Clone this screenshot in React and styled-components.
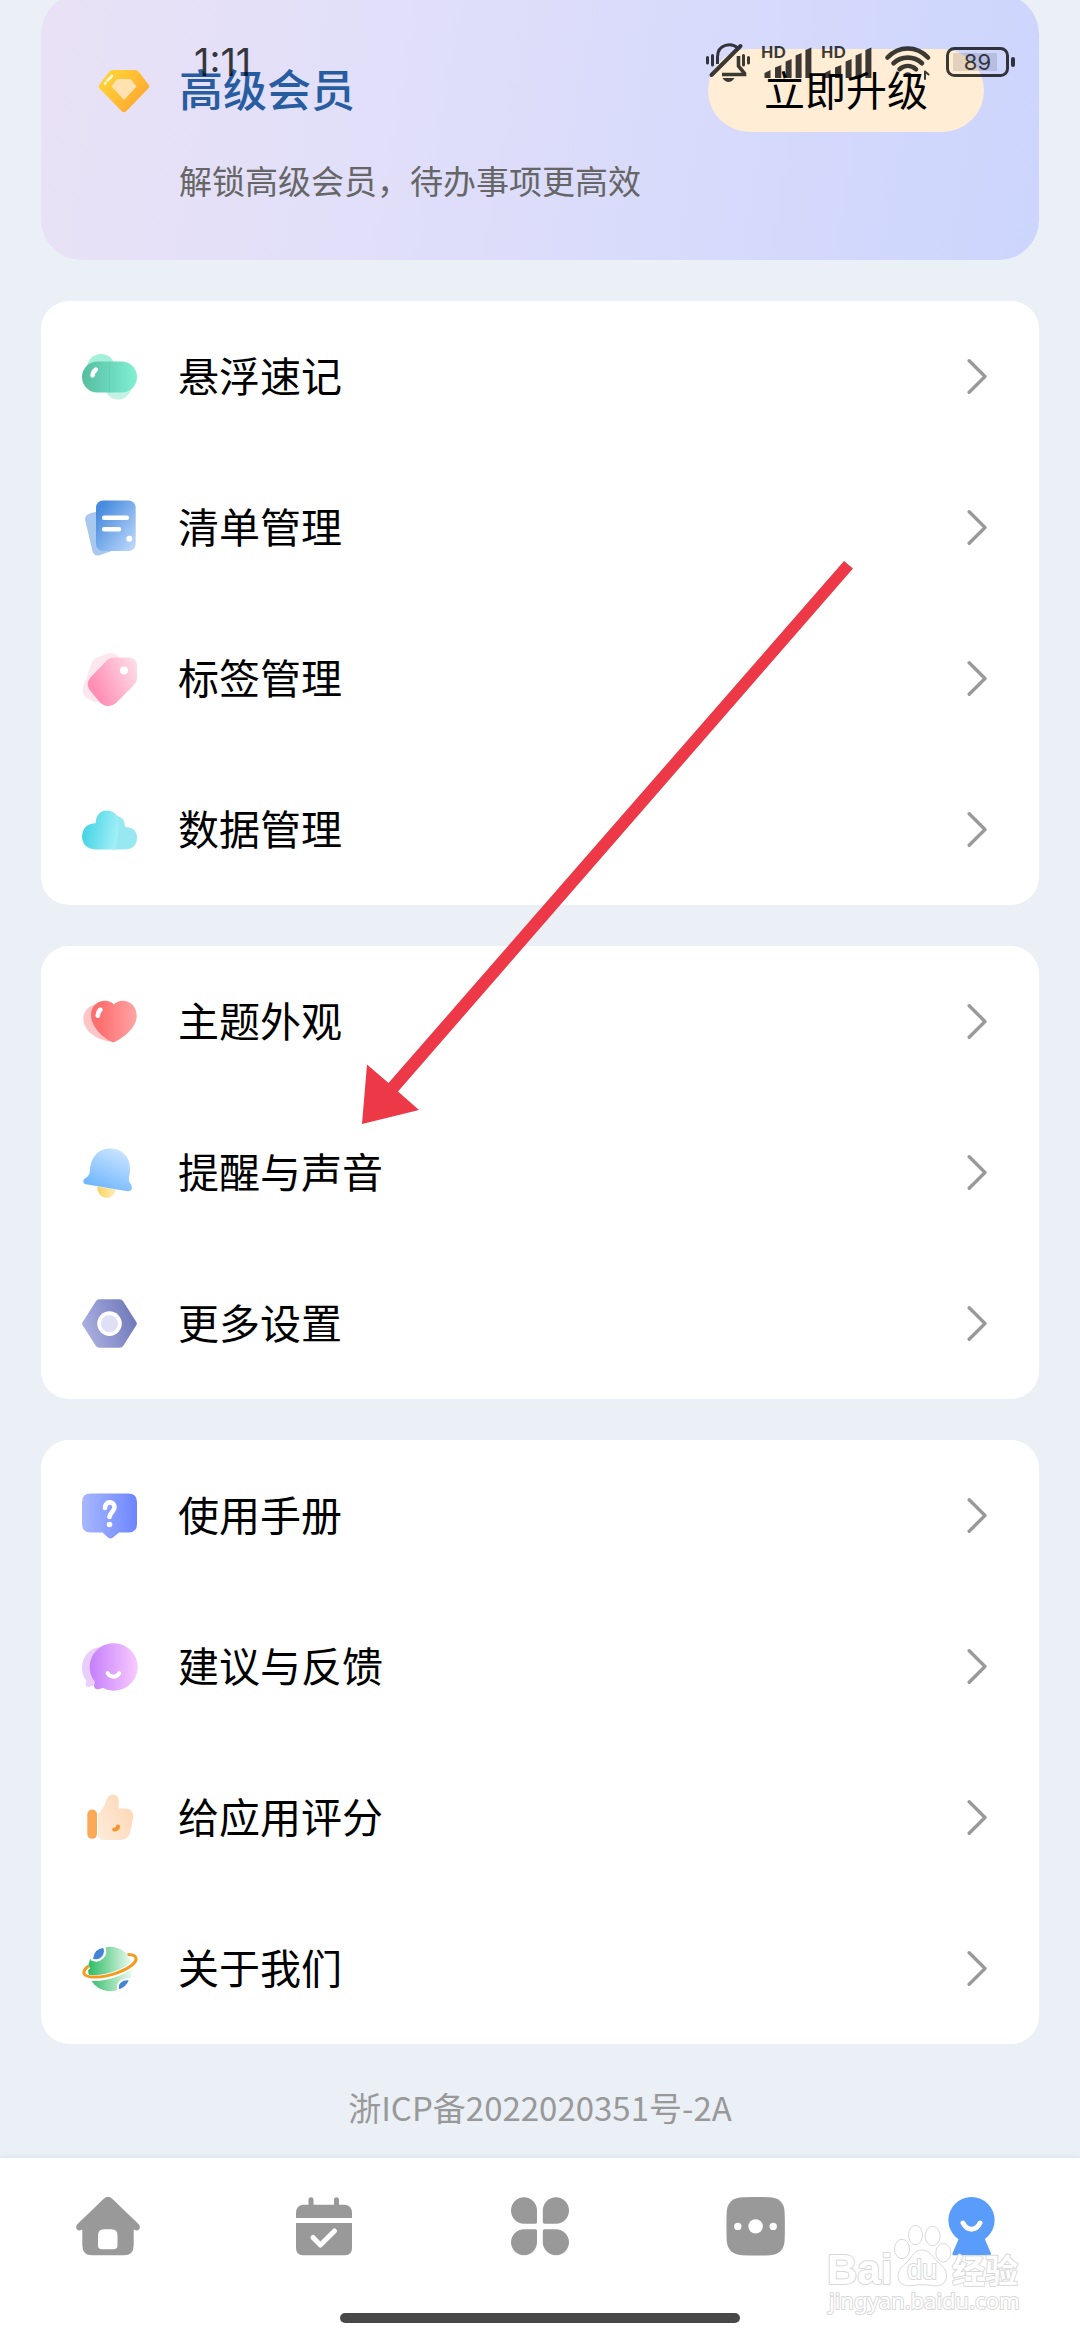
import styled, { createGlobalStyle } from "styled-components";
import { useState } from "react";

const GlobalStyle = createGlobalStyle`
  * {
    box-sizing: border-box;
  }
  body {
    margin: 0;
    background: #ebf0f7;
    font-family: "Noto Sans CJK SC", "Noto Sans", sans-serif;
  }
  button {
    border: none;
    background: none;
    padding: 0;
    margin: 0;
    font-family: inherit;
    color: inherit;
    cursor: pointer;
  }
  svg {
    display: block;
    flex-shrink: 0;
  }
`;

const Page = styled.div`
  position: relative;
  display: flex;
  flex-direction: column;
  min-height: 100vh;
  overflow: hidden;
`;

const StatusBar = styled.div`
  position: absolute;
  top: 0;
  left: 0;
  right: 0;
  height: 124px;
  padding: 0 65px 0 194px;
  display: flex;
  align-items: center;
  justify-content: space-between;
  color: #000000;
  opacity: 0.76;
  pointer-events: none;
`;

const Clock = styled.time`
  font-family: Inter, sans-serif;
  font-size: 38px;
  line-height: 44px;
`;

const StatusIcons = styled.div`
  display: flex;
  align-items: center;
  gap: 9px;
`;

const Content = styled.main`
  flex: 1;
  display: flex;
  flex-direction: column;
  gap: 41px;
  padding: 0 41px 29px;
`;

const MemberCard = styled.section`
  display: grid;
  grid-template-columns: 52px 1fr auto;
  column-gap: 29px;
  row-gap: 24px;
  align-items: center;
  margin-top: -6px;
  padding: 55px 55px 56px 57px;
  border-radius: 40px;
  background: linear-gradient(100deg, #e9e2f6 0%, #dfdefa 42%, #ccd5fd 100%);
`;

const MemberTitle = styled.h1`
  margin: 0;
  padding-bottom: 6px;
  font-size: 44px;
  font-weight: 500;
  line-height: 60px;
  color: #275da0;
`;

const MemberNote = styled.p`
  grid-column: 2 / -1;
  margin: 0;
  font-size: 33px;
  line-height: 48px;
  color: #666666;
`;

const UpgradeButton = styled.button`
  height: 83px;
  padding: 0 56px 6px;
  border-radius: 42px;
  background: #ffedd5;
  font-size: 41px;
  line-height: 60px;
  color: #000000;
`;

const MenuCard = styled.ul`
  list-style: none;
  margin: 0;
  padding: 0;
  border-radius: 28px;
  background: #ffffff;
`;

const MenuRow = styled.button`
  display: flex;
  align-items: center;
  gap: 40px;
  width: 100%;
  height: 151px;
  padding: 0 52px 0 41px;
  font-size: 41px;
  line-height: 60px;
  color: #000000;
  text-align: left;
`;

const MenuLabel = styled.span`
  flex: 1;
  padding-bottom: 6px;
`;

const Record = styled.footer`
  text-align: center;
  font-size: 33px;
  line-height: 44px;
  color: #999999;
`;

const BottomBar = styled.div`
  background: #ffffff;
  box-shadow: 0 -1px 4px rgba(120, 130, 150, 0.12);
`;

const Tabs = styled.nav`
  display: grid;
  grid-template-columns: repeat(5, 1fr);
`;

const TabButton = styled.button`
  display: flex;
  align-items: center;
  justify-content: center;
  height: 138px;
  color: ${(props) => (props.$active ? "#599cf9" : "#999999")};
`;

const HomeIndicator = styled.div`
  width: 400px;
  max-width: 60%;
  height: 10px;
  margin: 17px auto;
  border-radius: 5px;
  background: #484848;
`;

const Pointer = styled.svg`
  position: absolute;
  left: 360px;
  top: 560px;
  pointer-events: none;
`;

const Watermark = styled.svg`
  position: absolute;
  right: 55px;
  bottom: 15px;
  pointer-events: none;
`;

function Gradient({ id, from, to, x1 = 0, y1 = 0, x2 = 1, y2 = 0 }) {
  return (
    <defs>
      <linearGradient id={id} x1={x1} y1={y1} x2={x2} y2={y2}>
        <stop offset="0" stopColor={from} />
        <stop offset="1" stopColor={to} />
      </linearGradient>
    </defs>
  );
}

function MenuIcon({ children }) {
  return (
    <svg width="56" height="56" viewBox="0 0 56 56" fill="none" aria-hidden="true">
      {children}
    </svg>
  );
}

function TabIcon({ children }) {
  return (
    <svg width="64" height="64" viewBox="0 0 64 64" fill="currentColor" aria-hidden="true">
      {children}
    </svg>
  );
}

const CapsuleIcon = () => (
  <MenuIcon>
    <Gradient id="capsule" from="#55bda0" to="#80f0d3" />
    <circle cx="19" cy="19" r="14" fill="#a5f0db" />
    <circle cx="36" cy="37" r="13.5" fill="#c5f2e6" />
    <rect y="12.5" width="55" height="31" rx="15.5" fill="url(#capsule)" />
    <path d="M27.5 12.5V43.5" stroke="#5fceb0" strokeWidth="0.8" />
    <path d="M10.6 26.4C10.8 23.8 12 21.8 13.8 20.6" stroke="#fff" strokeWidth="4.6" strokeLinecap="round" />
  </MenuIcon>
);

const ListIcon = () => (
  <MenuIcon>
    <Gradient id="list" from="#468bdd" to="#c3dcfc" x1={0.1} y1={0.15} x2={1} y2={1} />
    <path
      d="M8.5 13.3L24 9L34 49.6L17.5 55.2Q12 56.5 10.4 51L3.2 20.5Q2.2 15 8.5 13.3Z"
      fill="#a9c8ee"
    />
    <rect x="14" y="0.5" width="39.7" height="50.5" rx="7" fill="url(#list)" />
    <path d="M22.2 17.8H44.8M22.2 29.2H37" stroke="#fff" strokeWidth="4.6" strokeLinecap="round" />
    <circle cx="47.3" cy="38.8" r="3" fill="#fff" />
  </MenuIcon>
);

const TagIcon = () => (
  <MenuIcon>
    <Gradient id="tag" from="#ff8db4" to="#ffdbe6" x1={0.1} y1={0.6} x2={1} y2={0.2} />
    <path
      d="M14 7L26 2.5Q31 1 36 5L50 30L20 52L11 50.5L4.5 47Q-0.5 43 1.5 35L9 14Q10.5 9 14 7Z"
      fill="#fde6ee"
    />
    <path
      d="M25 9Q28 6.5 32 6.5H46Q55 6.5 55 15.5V27Q55 31 52 34L34 52Q26 58.5 18.5 52L8.5 40Q3 33 8.5 26.5Z"
      fill="url(#tag)"
    />
    <circle cx="42" cy="19.5" r="4" fill="#fff" />
  </MenuIcon>
);

const CloudIcon = () => (
  <MenuIcon>
    <Gradient id="cloud" from="#43d3e5" to="#a8f1f8" x1={0} y1={0.6} x2={1} y2={0.8} />
    <path
      d="M30 47.5V14Q42 12 43.3 25Q55 25.5 55 36Q54.5 47 43 47.5Z"
      fill="#98e8f1"
    />
    <path
      d="M13.5 47.5Q0.5 46.5 0 34.5Q1 21.5 13.6 21.2Q14.5 9 24.5 8.5Q32 8.6 36.3 15Q37.5 32 33 47.5Z"
      fill="url(#cloud)"
    />
  </MenuIcon>
);

const HeartIcon = () => (
  <MenuIcon>
    <Gradient id="heart" from="#fe6f6f" to="#fea5a5" x1={0.2} />
    <path
      d="M27 47.5C13 45 1.3 36 1.3 25C1.3 15 9 10.5 16 10.5L34 30Z"
      fill="#fdc5c5"
    />
    <path
      d="M31.3 48.5C26 47 9 35 9 21C9 7 25 3 32 10.5C39 3 54.7 7 54.7 22C54.7 35 38 46 31.3 48.5Z"
      fill="url(#heart)"
    />
    <path d="M15.8 21.5C15.9 19.3 16.8 17.2 18.3 15.8" stroke="#fff" strokeWidth="4.8" strokeLinecap="round" />
  </MenuIcon>
);

const BellIcon = () => (
  <MenuIcon>
    <Gradient id="bell" from="#62b0ff" to="#c6e2ff" x1={0.1} y1={1} x2={0.6} y2={0} />
    <Gradient id="clapper" from="#fbd45f" to="#fdecb8" />
    <path d="M15.3 41.5L34 44.5C32.5 50 29 52.8 24.5 52.8C19 52.5 15 48 15.3 41.5Z" fill="url(#clapper)" />
    <path
      d="M8 24.5C9 11 17 3.5 28 3.5C40 3.5 48.5 12 48 25C47.5 32 45.5 35 48.5 38.5C51.5 43 49.5 46.8 45.5 46.2L4 39.3C0.5 38.7 0.5 35 3.5 33C7 31 7.5 29 8 24.5Z"
      fill="url(#bell)"
    />
  </MenuIcon>
);

const NutIcon = () => (
  <MenuIcon>
    <Gradient id="nut" from="#a6abdd" to="#6972b4" y1={0.3} />
    <path
      d="M17.5 3.2H37.5Q40 3.2 41.3 5.4L54.3 26Q55.4 27.6 54.3 29.3L41.3 49.7Q40 51.8 37.5 51.8H17.5Q15 51.8 13.7 49.7L0.7 29.3Q-0.4 27.6 0.7 26L13.7 5.4Q15 3.2 17.5 3.2Z"
      fill="url(#nut)"
    />
    <circle cx="27.5" cy="27.6" r="12.3" fill="#fff" />
    <circle cx="27.5" cy="27.6" r="8.6" fill="#dfe0f5" />
  </MenuIcon>
);

const HelpIcon = () => (
  <MenuIcon>
    <Gradient id="help" from="#a8b7ff" to="#6d86ff" />
    <path
      d="M8.5 5.5H46.5Q55 5.5 55 14V36Q55 44.5 46.5 44.5H37L31 49.6Q28.5 51.5 26 49.6L20.5 44.5H8.5Q0 44.5 0 36V14Q0 5.5 8.5 5.5Z"
      fill="url(#help)"
    />
    <path d="M23 20C23 12.5 32.3 12.8 32.5 19C32.5 24 27.5 24.5 27.5 29" stroke="#fff" strokeWidth="4.6" strokeLinecap="round" />
    <circle cx="27.5" cy="36.5" r="2.8" fill="#fff" />
  </MenuIcon>
);

const FeedbackIcon = () => (
  <MenuIcon>
    <Gradient id="feedback" from="#c47ffa" to="#f9caff" />
    <path
      d="M20 7.5C7 9 0 18 0 28.5C0 34 1.5 38 4.5 42L3.5 45Q3.5 48 6.5 47.8L12 46.5H25V8Z"
      fill="#e9cefb"
    />
    <path
      d="M31.5 4.3A23.7 23.7 0 1 1 21 49L16.5 50.3Q12 50.5 12 46.5L13 43A23.7 23.7 0 0 1 31.5 4.3Z"
      fill="url(#feedback)"
    />
    <path d="M25.6 34.2C28.5 38.8 34.5 38.8 37.2 34.2" stroke="#fff" strokeWidth="4" strokeLinecap="round" />
  </MenuIcon>
);

const ThumbIcon = () => (
  <MenuIcon>
    <Gradient id="thumb" from="#fdecdb" to="#fdd8b7" y1={1} y2={0.3} />
    <rect x="5.3" y="19.5" width="9.7" height="29.3" rx="4.8" fill="#fca957" />
    <path
      d="M16 24Q20.5 20 22.5 15L25 8.5Q27 4.5 31 4.5Q37 5 36.7 11V18.5H43Q52.5 19 51 29L48 43Q46 50 38 50H22Q16 50 16 44Z"
      fill="url(#thumb)"
    />
    <path d="M32.2 39.5C34.5 39.6 36 38.3 36 36.5" stroke="#fb9430" strokeWidth="4" strokeLinecap="round" />
  </MenuIcon>
);

const PlanetIcon = () => (
  <MenuIcon>
    <Gradient id="planet" from="#2abb62" to="#f0fbf4" />
    <circle cx="28.3" cy="28" r="22.3" fill="url(#planet)" />
    <path d="M10 17C11 10 16 6 22 5.5C26 14 18 22 10 18.5Z" fill="#4484d6" stroke="#fff" strokeWidth="2.4" />
    <path d="M36.5 49.5C34 42.500 39 37.500 48 38.500C46.500 44 41.500 48.500 36.500 49.500Z" fill="#4484d6" stroke="#fff" strokeWidth="2" />
    <path
      d="M6.5 25C-1 31 0.5 37 12 37C24 37.5 46 30.5 53 21C56 15.5 52 13.5 45.5 13.5"
      stroke="#fff"
      strokeWidth="6"
    />
    <path
      d="M6.5 25C-1 31 0.5 36 12 36C24 36.5 46 30 53 21C56 15.5 52 13.5 45.5 13.5"
      stroke="#f59a1c"
      strokeWidth="3"
    />
  </MenuIcon>
);

const GemIcon = () => (
  <svg width="52" height="44" viewBox="0 0 52 44" fill="none" aria-hidden="true">
    <Gradient id="gem" from="#ffcf36" to="#ffa930" x1={0.2} y1={0.2} x2={0.9} y2={0.7} />
    <path
      d="M14.5 1H37Q39.5 1 41 3L50.5 15.5Q52 17.5 50.3 19.5L28 42.5Q26 44 24 42.5L1.5 19.5Q0 17.5 1.5 15.5L11 3Q12.5 1 14.5 1Z"
      fill="url(#gem)"
    />
    <path d="M19 10.5H32.5L38 17.5L26 30.5L14 17.5Z" fill="#ffe2b0" stroke="#ffe2b0" strokeLinejoin="round" />
    <path d="M9.5 11.5L14 7M7 14.6L7.5 14" stroke="#fff8df" strokeWidth="2.6" strokeLinecap="round" />
  </svg>
);

const Chevron = () => (
  <svg width="20" height="36" viewBox="0 0 20 36" fill="none" aria-hidden="true">
    <path d="M2.2 1.8L18 17.5L2.2 33.2" stroke="#999" strokeWidth="3.4" strokeLinecap="round" strokeLinejoin="round" />
  </svg>
);

const MutedIcon = () => (
  <svg width="46" height="40" viewBox="0 0 46 40" fill="none" stroke="currentColor" strokeWidth="3" aria-hidden="true">
    <path d="M11.5 22V15C11.5 1.5 26 0.5 31.5 6" />
    <path d="M34.5 4L5.5 33" strokeWidth="4" strokeLinecap="round" />
    <path d="M32.5 14V24L38.5 31.5V32.5H16" strokeWidth="3.6" />
    <path d="M16.5 36H28.5Q26 40 22.5 40Q19 40 16.5 36Z" fill="currentColor" stroke="none" />
    <path d="M1.5 15.5V21M6.5 13.5V23M37.5 13.5V23M42.5 15.5V21" strokeLinecap="round" />
  </svg>
);

const SignalIcon = () => (
  <svg width="51" height="40" viewBox="0 0 51 40" fill="currentColor" aria-hidden="true">
    <text x="0" y="16" fontFamily="Lato, sans-serif" fontWeight="900" fontSize="16">
      HD
    </text>
    <path d="M3.5 31L9.5 28V36H3.5ZM14 25.5L20.3 23V36H14ZM24.6 19.5L30.6 17V36H24.6ZM34.6 13.5L40.6 11V36H34.6ZM44.4 8L50.4 5.5V36H44.4Z" />
  </svg>
);

const WifiIcon = () => (
  <svg width="55" height="40" viewBox="0 0 55 40" fill="none" stroke="currentColor" strokeWidth="4.6" strokeLinecap="round" aria-hidden="true">
    <path d="M6.5 15.5C18 3.5 35.5 3.5 47 15.5" />
    <path d="M12.5 21.2C20.5 13.7 33 13.7 41 21.2" />
    <path d="M18.5 27.2C23.5 23 30 23 35 27.2" />
    <path d="M24.5 32.5C26 31.5 27.5 31.5 29 32.5" strokeWidth="3" />
    <path d="M44 37V29.5M44 29.5L47.5 32.5" strokeWidth="2" />
  </svg>
);

const BatteryIcon = () => (
  <svg width="70" height="40" viewBox="0 0 70 40" fill="none" aria-hidden="true">
    <rect x="2.5" y="6.5" width="60" height="27" rx="7" stroke="currentColor" strokeWidth="3" />
    <rect x="8" y="11" width="44" height="18" fill="currentColor" opacity="0.15" />
    <rect x="66" y="15" width="4" height="10" rx="2" fill="currentColor" />
    <text x="32.5" y="28" fontFamily="Inter, sans-serif" fontSize="22" textAnchor="middle" fill="currentColor">
      89
    </text>
  </svg>
);

const HomeIcon = () => (
  <TabIcon>
    <path
      fillRule="evenodd"
      d="M27.5 4Q32 -0.5 36.5 4L62.5 29Q65 32 63 34.5Q61 36.5 57.7 34.5V50Q57.7 60.3 48 60.3H16Q6.3 60.3 6.3 50V34.5Q3 36.5 1 34.5Q-1 32 1.5 29ZM28 34.3Q22 34.3 22 40.5V50.5Q22 54.3 26 54.3H37.5Q41.5 54.3 41.5 50.5V40.5Q41.5 34.3 35.5 34.3Z"
    />
  </TabIcon>
);

const CalendarIcon = () => (
  <TabIcon>
    <path d="M11 9.7H53Q60 10.5 60 18V23H4V18Q4 10.5 11 9.7ZM4 28H60V53Q60 60.3 53 60.3H11Q4 60.3 4 53Z" />
    <path d="M19 4.8V12M44.5 4.8V12" stroke="currentColor" strokeWidth="5" strokeLinecap="round" />
    <path d="M21 42.5L28.4 50L42.5 36" stroke="#fff" strokeWidth="5" strokeLinecap="round" strokeLinejoin="round" fill="none" />
  </TabIcon>
);

const CloverIcon = () => (
  <TabIcon>
    <path d="M16 2.200C9 2.200 3 8 3 15.500C3 23 9 28.700 16 28.700H27.500Q29 28.700 29 27V15.500C29 8 23 2.200 16 2.200Z" />
    <path d="M48 2.200C55 2.200 61 8 61 15.500C61 23 55 28.700 48 28.700H36.500Q34.800 28.700 34.800 27V15.500C34.800 8 41 2.200 48 2.200Z" />
    <path d="M16 60.300C9 60.300 3 54.500 3 47.300C3 40 9 34.300 16 34.300H27.500Q29 34.300 29 36V47.300C29 54.500 23 60.300 16 60.300Z" />
    <path d="M48 60.300C55 60.300 61 54.500 61 47.300C61 40 55 34.300 48 34.300H36.500Q34.800 34.300 34.800 36V47.300C34.800 54.500 41 60.300 48 60.300Z" />
  </TabIcon>
);

const MoreIcon = () => (
  <TabIcon>
    <path d="M18 2.3Q32 1.7 46 2.3Q59.5 3 60.6 16.5Q61.2 31.5 60.6 46Q59.5 59.5 46 60.2Q32 60.8 18 60.2Q4 59.5 2.7 46Q2.2 31.5 2.7 16.5Q4 3 18 2.3Z" />
    <circle cx="13.8" cy="31.4" r="3.7" fill="#fff" />
    <circle cx="31.6" cy="31.4" r="7.2" fill="#fff" />
    <circle cx="49.2" cy="31.4" r="3.7" fill="#fff" />
  </TabIcon>
);

const ProfileIcon = () => (
  <TabIcon>
    <circle cx="31.5" cy="25.2" r="23.1" />
    <path d="M18.6 44H44.8L51 58.5Q51.5 60.3 50 60.3H13.5Q11.8 60.3 12.5 58.5Z" />
    <path d="M23 28C27 36.2 36 36.2 40 28" stroke="#fff" strokeWidth="5" strokeLinecap="round" fill="none" />
  </TabIcon>
);

const menuGroups = [
  {
    id: "manage",
    items: [
      { label: "悬浮速记", Icon: CapsuleIcon },
      { label: "清单管理", Icon: ListIcon },
      { label: "标签管理", Icon: TagIcon },
      { label: "数据管理", Icon: CloudIcon },
    ],
  },
  {
    id: "settings",
    items: [
      { label: "主题外观", Icon: HeartIcon },
      { label: "提醒与声音", Icon: BellIcon },
      { label: "更多设置", Icon: NutIcon },
    ],
  },
  {
    id: "about",
    items: [
      { label: "使用手册", Icon: HelpIcon },
      { label: "建议与反馈", Icon: FeedbackIcon },
      { label: "给应用评分", Icon: ThumbIcon },
      { label: "关于我们", Icon: PlanetIcon },
    ],
  },
];

const tabs = [
  { id: "home", label: "首页", Icon: HomeIcon },
  { id: "calendar", label: "日历", Icon: CalendarIcon },
  { id: "apps", label: "应用", Icon: CloverIcon },
  { id: "more", label: "更多", Icon: MoreIcon },
  { id: "profile", label: "我的", Icon: ProfileIcon },
];

function App() {
  const [currentTab, setCurrentTab] = useState("profile");

  return (
    <>
      <GlobalStyle />
      <Page>
        <Content>
          <MemberCard>
            <GemIcon />
            <MemberTitle>高级会员</MemberTitle>
            <UpgradeButton type="button">立即升级</UpgradeButton>
            <MemberNote>解锁高级会员，待办事项更高效</MemberNote>
          </MemberCard>
          {menuGroups.map((group) => (
            <MenuCard key={group.id}>
              {group.items.map(({ label, Icon }) => (
                <li key={label}>
                  <MenuRow type="button">
                    <Icon />
                    <MenuLabel>{label}</MenuLabel>
                    <Chevron />
                  </MenuRow>
                </li>
              ))}
            </MenuCard>
          ))}
          <Record>浙ICP备2022020351号-2A</Record>
        </Content>

        <BottomBar>
          <Tabs>
            {tabs.map(({ id, label, Icon }) => (
              <TabButton
                key={id}
                type="button"
                aria-label={label}
                $active={id === currentTab}
                onClick={() => setCurrentTab(id)}
              >
                <Icon />
              </TabButton>
            ))}
          </Tabs>
          <HomeIndicator />
        </BottomBar>

        <StatusBar>
          <Clock>1:11</Clock>
          <StatusIcons>
            <MutedIcon />
            <SignalIcon />
            <SignalIcon />
            <WifiIcon />
            <BatteryIcon />
          </StatusIcons>
        </StatusBar>

        <Pointer width="494" height="566" viewBox="0 0 494 566" aria-hidden="true">
          <path d="M484 1L493 8.5L38 531.5L59 550L2 564L7 504.5L28.5 523Z" fill="#ed3847" />
        </Pointer>

        <Watermark width="200" height="100" viewBox="0 0 200 100" fill="#fff" stroke="#d9d9d9" strokeWidth="2">
          <g strokeWidth="1">
            <ellipse cx="77" cy="24" rx="7.5" ry="9.7" />
            <ellipse cx="90.5" cy="10" rx="7" ry="9.7" />
            <ellipse cx="107.6" cy="11" rx="7.5" ry="9.7" />
            <ellipse cx="118.3" cy="27.7" rx="7.5" ry="9.3" />
            <path d="M97 25C104 25 108 32 114 38C120 43 122 47 121.5 52C120 61 113 61.5 107 60.5C100 59.5 94 59.5 87 60.5C79 62 73 58 73 51C73 44 78 41 83 36C87 31 90 25 97 25Z" />
          </g>
          <g paintOrder="stroke" strokeLinejoin="round" fontFamily='"Liberation Sans", "Noto Sans CJK SC", sans-serif'>
            <text x="2" y="59" fontSize="42" fontWeight="700">Bai</text>
            <text x="82" y="54" fontSize="27">du</text>
            <text x="127" y="58" fontSize="33" fontWeight="700">经验</text>
            <text x="4" y="84" fontSize="22" fontFamily="Noto Sans, sans-serif">jingyan.baidu.com</text>
          </g>
        </Watermark>
      </Page>
    </>
  );
}

export default App;
